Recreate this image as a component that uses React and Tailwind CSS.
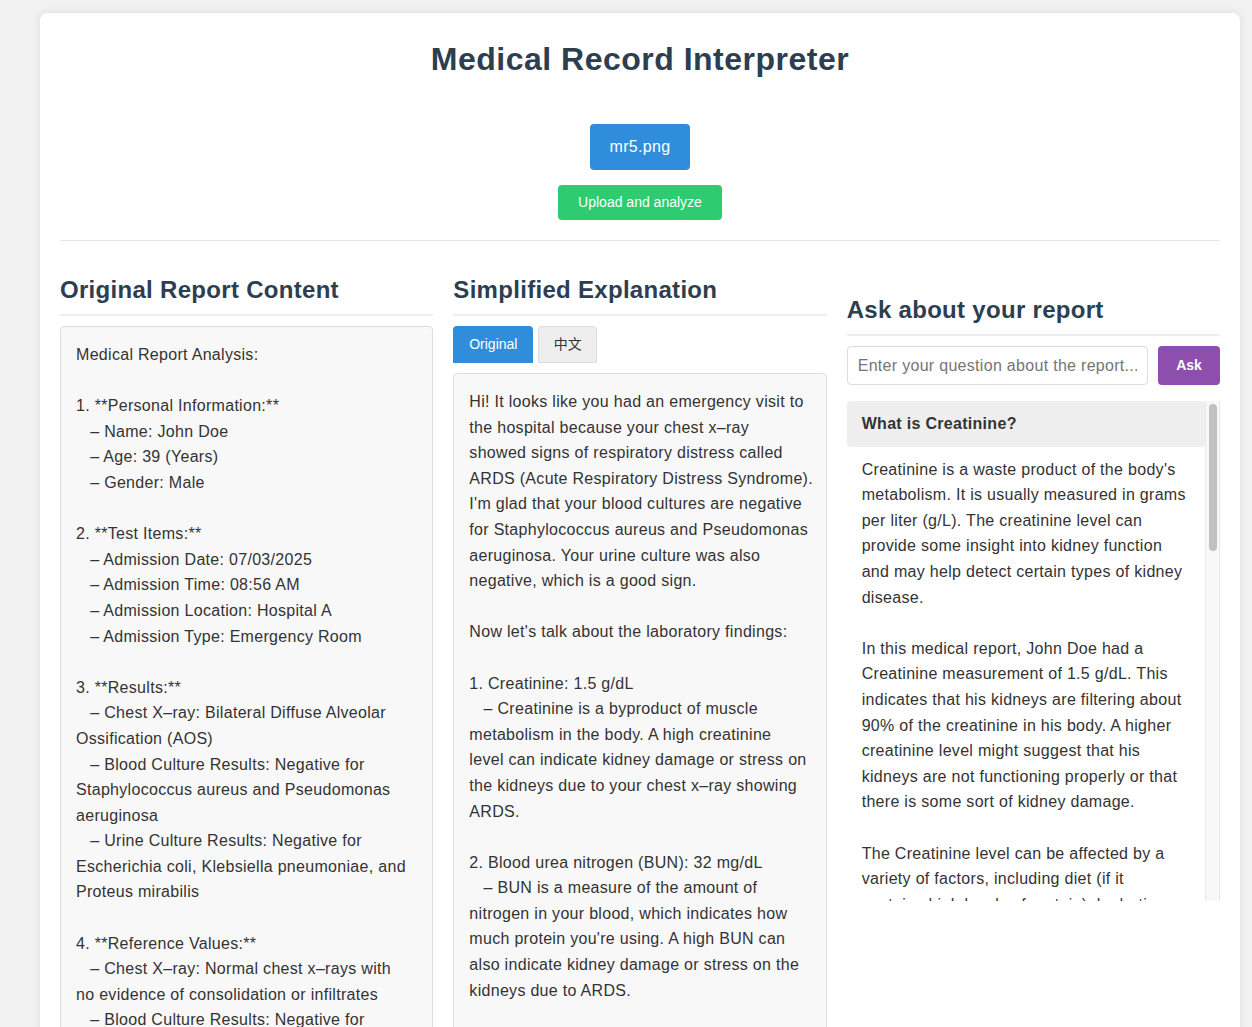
const originalText = `Medical Report Analysis:

1. **Personal Information:**
   – Name: John Doe
   – Age: 39 (Years)
   – Gender: Male

2. **Test Items:**
   – Admission Date: 07/03/2025
   – Admission Time: 08:56 AM
   – Admission Location: Hospital A
   – Admission Type: Emergency Room

3. **Results:**
   – Chest X–ray: Bilateral Diffuse Alveolar
Ossification (AOS)
   – Blood Culture Results: Negative for
Staphylococcus aureus and Pseudomonas
aeruginosa
   – Urine Culture Results: Negative for
Escherichia coli, Klebsiella pneumoniae, and
Proteus mirabilis

4. **Reference Values:**
   – Chest X–ray: Normal chest x–rays with
no evidence of consolidation or infiltrates
   – Blood Culture Results: Negative for
Staphylococcus aureus and Pseudomonas
aeruginosa
   – Urine Culture Results: Negative for
common urinary pathogens`;

const simpleText = `Hi! It looks like you had an emergency visit to
the hospital because your chest x–ray
showed signs of respiratory distress called
ARDS (Acute Respiratory Distress Syndrome).
I'm glad that your blood cultures are negative
for Staphylococcus aureus and Pseudomonas
aeruginosa. Your urine culture was also
negative, which is a good sign.

Now let's talk about the laboratory findings:

1. Creatinine: 1.5 g/dL
   – Creatinine is a byproduct of muscle
metabolism in the body. A high creatinine
level can indicate kidney damage or stress on
the kidneys due to your chest x–ray showing
ARDS.

2. Blood urea nitrogen (BUN): 32 mg/dL
   – BUN is a measure of the amount of
nitrogen in your blood, which indicates how
much protein you're using. A high BUN can
also indicate kidney damage or stress on the
kidneys due to ARDS.

3. Chest X–ray: Bilateral Diffuse Alveolar
Ossification
   – This means there are changes in the
small air sacs of your lungs.`;

const answerText = `Creatinine is a waste product of the body's metabolism. It is usually measured in grams per liter (g/L). The creatinine level can provide some insight into kidney function and may help detect certain types of kidney disease.

In this medical report, John Doe had a Creatinine measurement of 1.5 g/dL. This indicates that his kidneys are filtering about 90% of the creatinine in his body. A higher creatinine level might suggest that his kidneys are not functioning properly or that there is some sort of kidney damage.

The Creatinine level can be affected by a variety of factors, including diet (if it contains high levels of protein), hydration status, muscle mass and certain medications. It is important to discuss these results with your doctor.`;

function SectionTitle({ children }) {
  return (
    <h2 className="text-[24px] leading-[29px] font-bold tracking-[0.3px] text-[#2c3e50] pb-[10px] border-b-2 border-[#eee]">
      {children}
    </h2>
  );
}

export default function App() {
  return (
    <div
      className="h-screen overflow-hidden bg-[#f2f2f2] pt-[13px] pl-[40px]"
      style={{ fontFamily: '"Liberation Sans", "Noto Sans CJK SC", sans-serif' }}
    >
      <div className="w-[1200px] bg-white rounded-[8px] shadow-[0_0_10px_rgba(0,0,0,0.1)] px-[20px] pt-[27px]">
        <h1 className="text-center text-[32px] leading-[38px] font-bold tracking-[0.5px] text-[#2c3e50]">
          Medical Record Interpreter
        </h1>

        <div className="flex flex-col items-center mt-[46px] pb-[20px] border-b border-[#e5e5e5]">
          <button className="bg-[#2f8ddb] text-white text-[16px] tracking-[0.3px] h-[46px] px-[20px] rounded-[4px]">
            mr5.png
          </button>
          <button className="mt-[15px] bg-[#2ecc71] text-white text-[14px] h-[35px] px-[20px] rounded-[4px]">
            Upload and analyze
          </button>
        </div>

        <div className="grid grid-cols-3 gap-[20px] pt-[34px]">
          <div>
            <SectionTitle>Original Report Content</SectionTitle>
            <div className="mt-[10px] bg-[#f8f8f8] border border-[#ddd] rounded-[4px] p-[15px] text-[16px] leading-[25.6px] tracking-[0.3px] text-[#333] whitespace-pre">
              {originalText}
            </div>
          </div>

          <div>
            <SectionTitle>Simplified Explanation</SectionTitle>
            <div className="flex gap-[5px] mt-[10px]">
              <button className="h-[37px] w-[80px] bg-[#2f8ddb] text-white text-[14px] rounded-t-[4px]">
                Original
              </button>
              <button className="h-[37px] w-[59px] bg-[#eee] border border-[#ddd] text-[#333] text-[14px] rounded-t-[4px]">
                中文
              </button>
            </div>
            <div className="mt-[10px] bg-[#f8f8f8] border border-[#ddd] rounded-[4px] p-[15px] text-[16px] leading-[25.6px] tracking-[0.3px] text-[#333] whitespace-pre">
              {simpleText}
            </div>
          </div>

          <div className="pt-[20px]">
            <SectionTitle>Ask about your report</SectionTitle>
            <div className="flex gap-[10px] mt-[10px]">
              <input
                type="text"
                placeholder="Enter your question about the report..."
                className="flex-1 min-w-0 h-[39px] border border-[#ddd] rounded-[4px] px-[10px] text-[16px] tracking-[0.3px] placeholder:text-[#757575] outline-none"
              />
              <button className="w-[62px] h-[39px] bg-[#8e4ead] text-white text-[14px] font-semibold rounded-[4px]">
                Ask
              </button>
            </div>
            <div className="mt-[16px] h-[500px] flex">
              <div className="flex-1 min-w-0 overflow-hidden">
                <div className="bg-[#eee] rounded-[4px] px-[15px] py-[10px] text-[16px] leading-[25.6px] font-bold tracking-[0.3px] text-[#333]">
                  What is Creatinine?
                </div>
                <div className="px-[15px] py-[10px] text-[16px] leading-[25.6px] tracking-[0.3px] text-[#333] whitespace-pre-wrap">
                  {answerText}
                </div>
              </div>
              <div className="w-[15px] h-full bg-[#f8f8f8] border-x border-[#e8e8e8] pt-[3px] flex justify-center">
                <div className="w-[8px] h-[147px] rounded-full bg-[#c1c1c1]" />
              </div>
            </div>
          </div>
        </div>
      </div>
    </div>
  );
}
